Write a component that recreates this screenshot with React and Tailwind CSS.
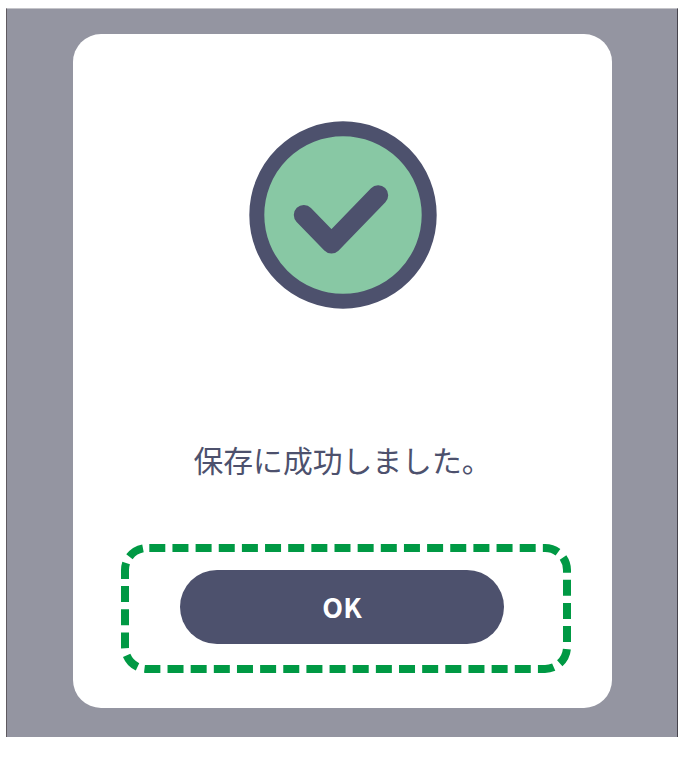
import React from "react";

const CheckIcon = () => (
  <svg width="188" height="188" viewBox="0 0 188 188" className="block">
    <circle cx="94" cy="94" r="86.2" fill="#88c8a4" stroke="#4d516d" strokeWidth="15" />
    <path
      d="M54.8 94 L82.5 122.5 L129.2 74.3"
      fill="none"
      stroke="#4d516d"
      strokeWidth="20"
      strokeLinecap="round"
      strokeLinejoin="round"
    />
  </svg>
);

// dashed outline sits a little off-centre from the button in the reference
const DashedFrame = () => (
  <svg
    width="450"
    height="129"
    viewBox="0 0 450 129"
    className="absolute -left-[59px] -top-[26px] pointer-events-none"
  >
    <rect
      x="4"
      y="4"
      width="442"
      height="121"
      rx="22"
      fill="none"
      stroke="#009944"
      strokeWidth="8"
      strokeDasharray="16 7.15"
      strokeDashoffset="-2.3"
    />
  </svg>
);

export default function App() {
  return (
    <div className="w-[683px] h-[765px] bg-white pt-[8px] pl-[6px] font-['Noto_Sans_CJK_JP','Noto_Sans',sans-serif]">
      <div className="w-[672px] h-[729px] bg-[#9495a1] border-l border-l-[#5f5a60] border-r border-r-[#45434c] border-t border-t-[#c4c4c9] flex justify-center pt-[25px] pl-[1px]">
        <div className="w-[539px] h-[674px] bg-white rounded-[28px] flex flex-col items-center">
          <div className="mt-[87px]">
            <CheckIcon />
          </div>
          <p className="mt-[125px] text-[29.8px] leading-[50px] text-[#4d516d] text-center">
            保存に成功しました。
          </p>
          <div className="relative mt-[86px] mr-[1px]">
            <DashedFrame />
            <button className="block w-[324px] h-[74px] rounded-full bg-[#4d516d] text-white text-[27px] font-bold">
              OK
            </button>
          </div>
        </div>
      </div>
    </div>
  );
}
